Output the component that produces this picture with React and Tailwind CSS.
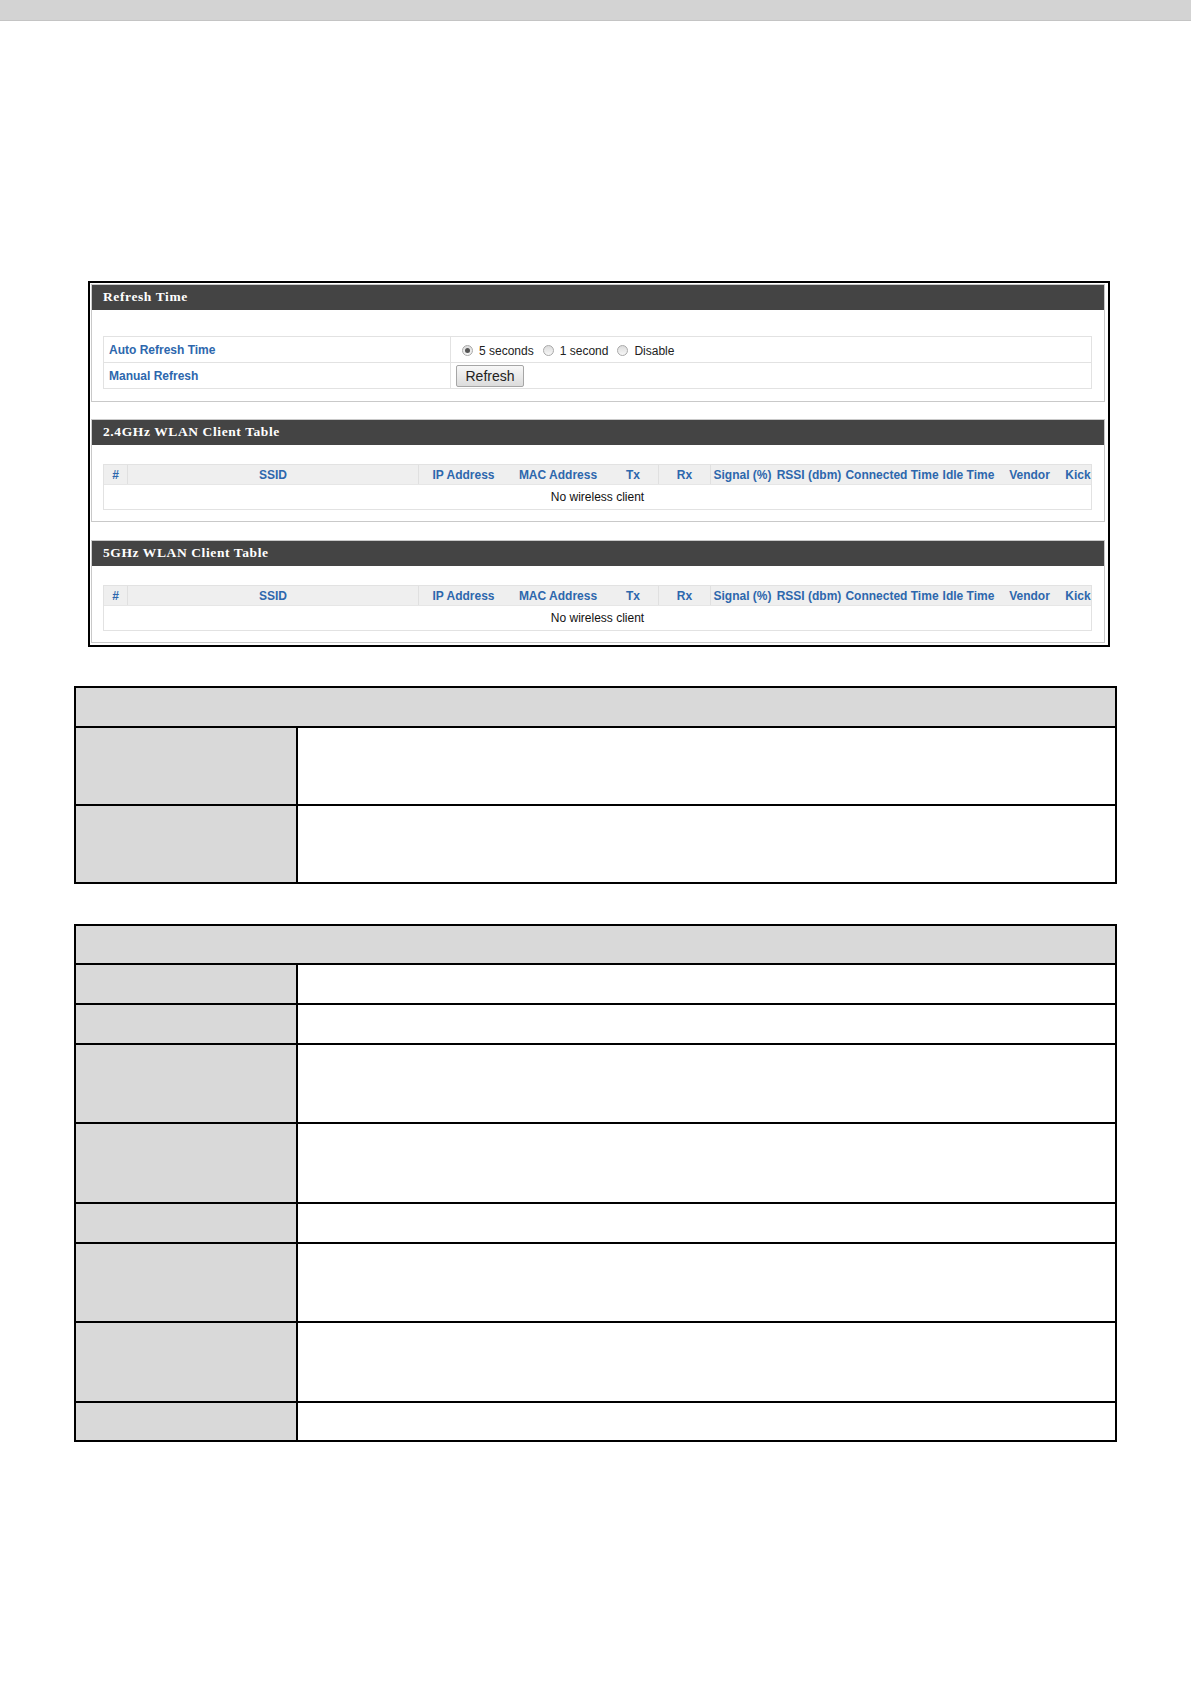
import React from "react";

const blue = "text-[#2d67ad]";

const Radio = ({ checked, label }) => (
  <span className="inline-flex items-center mr-[9px]">
    <span className="w-[11px] h-[11px] rounded-full border border-[#a9a9a9] bg-gradient-to-b from-[#dcdcdc] to-[#f7f7f7] flex items-center justify-center mt-[2px]">
      {checked && <span className="w-[5px] h-[5px] rounded-full bg-[#555]"></span>}
    </span>
    <span className="ml-[6px] text-[12px] text-[#222] mt-[3px]">{label}</span>
  </span>
);

const PanelHeader = ({ title }) => (
  <div className="h-[25px] bg-[#444444] flex items-center pl-[11px]">
    <span
      className="text-white font-bold text-[13.5px] tracking-[0.6px]"
      style={{ fontFamily: '"Liberation Serif", "DejaVu Serif", serif' }}
    >
      {title}
    </span>
  </div>
);

const cols = [
  { name: "#", w: "w-[24px]", sep: true },
  { name: "SSID", w: "w-[291px]", sep: true },
  { name: "IP Address", w: "w-[89px]" },
  { name: "MAC Address", w: "w-[100px]" },
  { name: "Tx", w: "w-[51px]", sep: true },
  { name: "Rx", w: "w-[52px]", sep: true },
  { name: "Signal (%)", w: "w-[63px]" },
  { name: "RSSI (dbm)", w: "w-[70px]" },
  { name: "Connected Time", w: "w-[96px]" },
  { name: "Idle Time", w: "w-[57px]" },
  { name: "Vendor", w: "w-[65px]" },
  { name: "Kick", w: "w-[32px]" },
];

const ClientTable = ({ title }) => (
  <div className="border border-[#c9c9c9] mr-[3px] ml-[1px]">
    <PanelHeader title={title} />
    <div className="pt-[19px] pb-[11px] pl-[11px] pr-[12px]">
      <div className="border border-[#e2e2e2]">
        <div className="flex h-[19px] bg-[#efefef]">
          {cols.map((c) => (
            <div
              key={c.name}
              className={`${c.w} shrink-0 flex items-center justify-center whitespace-nowrap text-[12px] font-bold ${blue} ${
                c.sep ? "border-r border-[#e0e0e0]" : ""
              }`}
            >
              {c.name}
            </div>
          ))}
        </div>
        <div className="h-[25px] flex items-center justify-center text-[12px] text-[#111] border-t border-[#e6e6e6]">
          No wireless client
        </div>
      </div>
    </div>
  </div>
);

const DocTable = ({ rows }) => (
  <div className="w-[1043px] ml-[74px] bg-black p-[2px] grid grid-cols-[220px_1fr] gap-[2px]">
    <div className="col-span-2 bg-[#d9d9d9]" style={{ height: rows[0] }}></div>
    {rows.slice(1).map((h, i) => (
      <React.Fragment key={i}>
        <div className="bg-[#d9d9d9]" style={{ height: h }}></div>
        <div className="bg-white"></div>
      </React.Fragment>
    ))}
  </div>
);

export default function App() {
  return (
    <div
      className="w-[1191px] min-h-[1684px] bg-white"
      style={{ fontFamily: '"Liberation Sans", Arial, sans-serif' }}
    >
      <div className="h-[21px] bg-[#d3d3d3] border-b border-[#c4c4c4]"></div>

      <div className="mt-[260px] ml-[88px] w-[1022px] border-2 border-black pt-[1px] pb-[2px]">
        {/* Refresh Time */}
        <div className="border border-[#c9c9c9] mr-[3px] ml-[1px]">
          <PanelHeader title="Refresh Time" />
          <div className="pt-[26px] pb-[12px] pl-[11px] pr-[12px]">
            <div className="border border-[#e2e2e2]">
              <div className="flex h-[25px]">
                <div className={`w-[347px] border-r border-[#e2e2e2] flex items-center pl-[5px] text-[12px] font-bold ${blue}`}>
                  Auto Refresh Time
                </div>
                <div className="flex-1 flex items-center pl-[11px]">
                  <Radio checked label="5 seconds" />
                  <Radio label="1 second" />
                  <Radio label="Disable" />
                </div>
              </div>
              <div className="flex h-[26px] border-t border-[#e2e2e2]">
                <div className={`w-[347px] border-r border-[#e2e2e2] flex items-center pl-[5px] text-[12px] font-bold ${blue}`}>
                  Manual Refresh
                </div>
                <div className="flex-1 flex items-center pl-[5px]">
                  <button className="w-[68px] h-[22px] border border-[#a6a6a6] rounded-[2px] bg-gradient-to-b from-[#f8f8f8] to-[#dcdcdc] text-[14px] text-[#222] leading-none">
                    Refresh
                  </button>
                </div>
              </div>
            </div>
          </div>
        </div>

        <div className="h-[17px]"></div>
        <ClientTable title="2.4GHz WLAN Client Table" />
        <div className="h-[18px]"></div>
        <ClientTable title="5GHz WLAN Client Table" />
      </div>

      <div className="h-[39px]"></div>
      <DocTable rows={[38, 76, 76]} />
      <div className="h-[40px]"></div>
      <DocTable rows={[37, 38, 38, 77, 78, 38, 77, 78, 37]} />
    </div>
  );
}
